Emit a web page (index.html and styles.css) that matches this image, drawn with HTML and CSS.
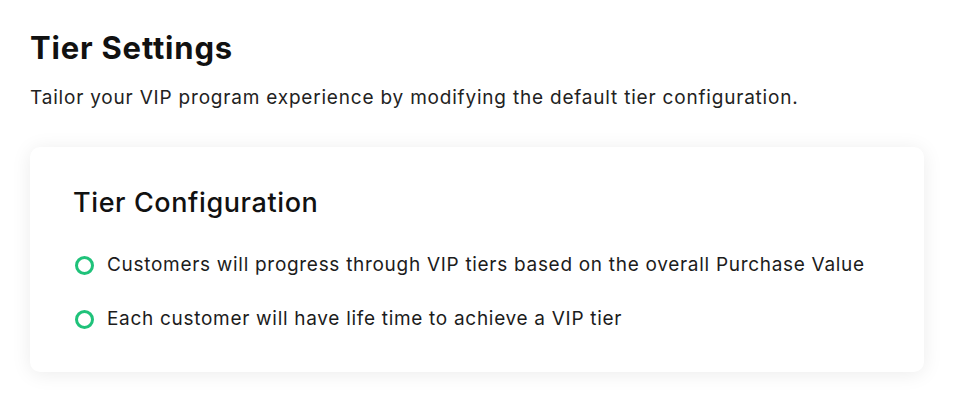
FILE: index.html
```html
<!DOCTYPE html>
<html lang="en">
<head>
    <meta charset="UTF-8">
    <meta name="viewport" content="width=device-width, initial-scale=1.0">
    <title>Tier Settings</title>
    <link rel="stylesheet" href="styles.css">
</head>
<body>
    <div class="page">
        <h1 class="page-title">Tier Settings</h1>
        <p class="page-desc">Tailor your VIP program experience by modifying the default tier configuration.</p>

        <div class="card">
            <h2 class="card-title">Tier Configuration</h2>
            <ul class="config-list">
                <li>
                    <span class="dot"></span>
                    Customers will progress through VIP tiers based on the overall Purchase Value
                </li>
                <li>
                    <span class="dot"></span>
                    Each customer will have life time to achieve a VIP tier
                </li>
            </ul>
        </div>
    </div>
</body>
</html>
```

FILE: styles.css
```css
/* General styling */
body {
    margin: 0;
    font-family: Inter, "Noto Sans", Arial, sans-serif;
    background-color: #ffffff;
    color: #111111;
}
.page {
    padding: 30px 30px 30px 30px;
}
.page-title {
    margin: 0;
    font-size: 31px;
    line-height: 36px;
    font-weight: 700;
    letter-spacing: 0.8px;
}
.page-desc {
    margin: 20px 0 0 0;
    font-size: 19px;
    line-height: 24px;
    letter-spacing: 0.8px;
    color: #222222;
}

/* Configuration card */
.card {
    margin-top: 37px;
    width: 894px;
    box-sizing: border-box;
    padding: 40px 43px 40px 43px;
    background-color: #ffffff;
    border-radius: 10px;
    box-shadow: 0 2px 20px rgba(0, 0, 0, 0.08);
}
.card-title {
    margin: 0;
    font-size: 27px;
    line-height: 32px;
    font-weight: 500;
    letter-spacing: 0.6px;
}
.config-list {
    list-style: none;
    margin: 33px 0 0 0;
    padding: 0;
}
.config-list li {
    display: flex;
    align-items: center;
    font-size: 19px;
    line-height: 26px;
    letter-spacing: 0.7px;
    color: #1c1c1c;
}
.config-list li + li {
    margin-top: 28px;
}
.dot {
    width: 13px;
    height: 13px;
    border: 3px solid #1fc27a; /* green status ring */
    border-radius: 50%;
    margin: 0 13px 0 2px;
    flex-shrink: 0;
}
```
